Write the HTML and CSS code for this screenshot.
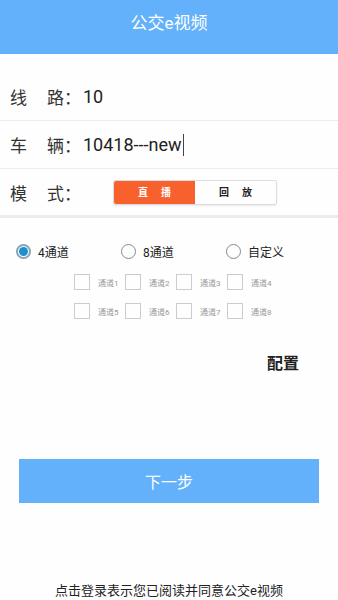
FILE: index.html
```html
<!DOCTYPE html>
<html lang="zh-CN">
<head>
  <meta charset="UTF-8">
  <title>公交e视频</title>
  <link rel="stylesheet" href="styles.css">
</head>
<body>
  <div class="header">公交e视频</div>

  <div class="form">
    <div class="row">
      <span class="label"><span>线</span><span>路：</span></span>
      <span class="value">10</span>
    </div>
    <div class="row">
      <span class="label"><span>车</span><span>辆：</span></span>
      <span class="value">10418---new<span class="cursor"></span></span>
    </div>
    <div class="row last">
      <span class="label"><span>模</span><span>式：</span></span>
      <div class="toggle">
        <div class="tab active">直播</div>
        <div class="tab">回放</div>
      </div>
    </div>
  </div>

  <div class="channels">
    <div class="radios">
      <label class="radio"><span class="dot checked"></span>4通道</label>
      <label class="radio"><span class="dot"></span>8通道</label>
      <label class="radio"><span class="dot"></span>自定义</label>
    </div>
    <div class="checks">
      <div class="check"><span class="box"></span>通道1</div>
      <div class="check"><span class="box"></span>通道2</div>
      <div class="check"><span class="box"></span>通道3</div>
      <div class="check"><span class="box"></span>通道4</div>
      <div class="check"><span class="box"></span>通道5</div>
      <div class="check"><span class="box"></span>通道6</div>
      <div class="check"><span class="box"></span>通道7</div>
      <div class="check"><span class="box"></span>通道8</div>
    </div>
  </div>

  <div class="config">配置</div>

  <button class="next">下一步</button>

  <div class="footer">点击登录表示您已阅读并同意公交e视频</div>
</body>
</html>
```

FILE: styles.css
```css
body {
  margin: 0;
  width: 338px;
  height: 600px;
  background: #fefefe;
  font-family: Roboto, "Noto Sans CJK SC", sans-serif;
  color: #222;
  overflow: hidden;
}

.header {
  height: 54px;
  background: #62b1fa;
  color: #fff;
  font-size: 17px;
  line-height: 46px;
  text-align: center;
}

.form {
  margin-top: 19px;
}

.row {
  height: 47px;
  border-bottom: 1px solid #ececec;
  display: flex;
  align-items: center;
  padding-left: 10px;
}

.row.last {
  border-bottom: 3px solid #ececec;
  height: 46px;
}

.label {
  display: flex;
  font-size: 17px;
  color: #333;
  width: 73px;
}

.label span:first-child {
  width: 37px;
}

.value {
  font-size: 18px;
  color: #222;
  display: flex;
  align-items: center;
}

.cursor {
  display: inline-block;
  width: 1px;
  height: 22px;
  background: #444;
  margin-left: 1px;
}

.toggle {
  display: flex;
  margin-left: 30px;
  width: 162px;
  height: 23px;
  border: 1px solid #ddd;
  border-radius: 2px;
  box-shadow: 0 1px 2px rgba(0,0,0,0.08);
}

.tab {
  flex: 1;
  font-size: 10px;
  font-weight: bold;
  letter-spacing: 13px;
  text-indent: 13px;
  text-align: center;
  line-height: 23px;
  color: #222;
}

.tab.active {
  background: #f8602e;
  color: #fff;
  border-radius: 2px 0 0 2px;
}

.channels {
  padding-top: 25px;
}

.radios {
  display: flex;
  padding-left: 16px;
}

.radio {
  display: flex;
  align-items: center;
  font-size: 12px;
  color: #222;
  width: 105px;
}

.dot {
  width: 15px;
  height: 15px;
  border: 1px solid #888;
  border-radius: 50%;
  margin-right: 7px;
  box-sizing: border-box;
  position: relative;
}

.dot.checked {
  border: 2px solid #8aa4b4;
}

.dot.checked::after {
  content: "";
  position: absolute;
  left: 1px;
  top: 1px;
  width: 9px;
  height: 9px;
  border-radius: 50%;
  background: #1d8ecf;
}

.checks {
  display: grid;
  grid-template-columns: repeat(4, 51px);
  row-gap: 13px;
  padding-left: 74px;
  margin-top: 14px;
}

.check {
  display: flex;
  align-items: center;
  font-size: 8px;
  color: #999;
}

.box {
  width: 14px;
  height: 14px;
  border: 1px solid #ccc;
  margin-right: 8px;
}

.config {
  text-align: right;
  padding-right: 39px;
  margin-top: 31px;
  font-size: 16px;
  font-weight: bold;
  color: #222;
}

.next {
  display: block;
  margin: 85px auto 0;
  width: 300px;
  height: 44px;
  background: #62b1fa;
  border: none;
  color: #fff;
  font-size: 16px;
  font-family: Roboto, "Noto Sans CJK SC", sans-serif;
}

.footer {
  margin-top: 77px;
  text-align: center;
  font-size: 13px;
  color: #222;
}
```
